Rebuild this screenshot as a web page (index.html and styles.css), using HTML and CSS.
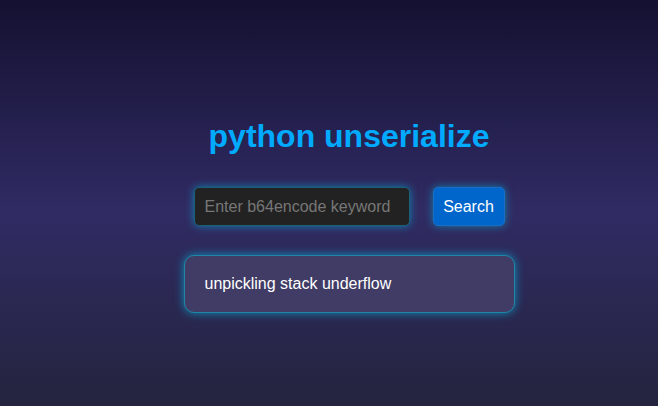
FILE: index.html
```html
<!DOCTYPE html>
<html lang="en">
<head>
<meta charset="utf-8">
<title>python unserialize</title>
<link rel="stylesheet" href="styles.css">
</head>
<body>
<div class="page">
  <h1 class="title">python unserialize</h1>
  <form class="search" onsubmit="return false;">
    <input class="search-input" type="text" placeholder="Enter b64encode keyword">
    <button class="search-btn" type="submit">Search</button>
  </form>
  <div class="result">unpickling stack underflow</div>
</div>
</body>
</html>
```

FILE: styles.css
```css
html, body {
  margin: 0;
  padding: 0;
  height: 100%;
}
body {
  font-family: "Liberation Sans", Arial, sans-serif;
  background: linear-gradient(to bottom, #141131 0%, #302b63 52%, #24243e 100%);
  color: #fff;
}
.page {
  box-sizing: border-box;
  min-height: 100%;
  padding: 118px 0 0 40px;
  display: flex;
  flex-direction: column;
  align-items: center;
}
.title {
  margin: 0;
  font-size: 32px;
  font-weight: bold;
  color: #00aaff;
  line-height: 37px;
}
.search {
  margin-top: 32px;
  display: flex;
  gap: 23px;
}
.search-input {
  box-sizing: border-box;
  width: 216px;
  height: 39px;
  padding: 0 10px;
  background: #222;
  border: 1px solid #1b5f78;
  border-radius: 5px;
  box-shadow: 0 0 8px rgba(0, 188, 230, 0.6);
  color: #ddd;
  font-family: "Liberation Sans", Arial, sans-serif;
  font-size: 16px;
  outline: none;
}
.search-input::placeholder {
  color: #777;
}
.search-btn {
  box-sizing: border-box;
  width: 72px;
  height: 39px;
  padding: 0;
  background: #0066cc;
  border: 1px solid #1a6fc4;
  border-radius: 5px;
  box-shadow: 0 0 8px rgba(0, 188, 230, 0.6);
  color: #fff;
  font-family: "Liberation Sans", Arial, sans-serif;
  font-size: 16px;
  cursor: pointer;
}
.result {
  box-sizing: border-box;
  margin-top: 29px;
  width: 331px;
  height: 58px;
  padding: 19px 20px;
  background: #403c66;
  border: 1px solid #1f86a8;
  border-radius: 10px;
  box-shadow: 0 0 10px rgba(0, 188, 230, 0.7);
  font-size: 16px;
  line-height: 18px;
  color: #fff;
}
```
